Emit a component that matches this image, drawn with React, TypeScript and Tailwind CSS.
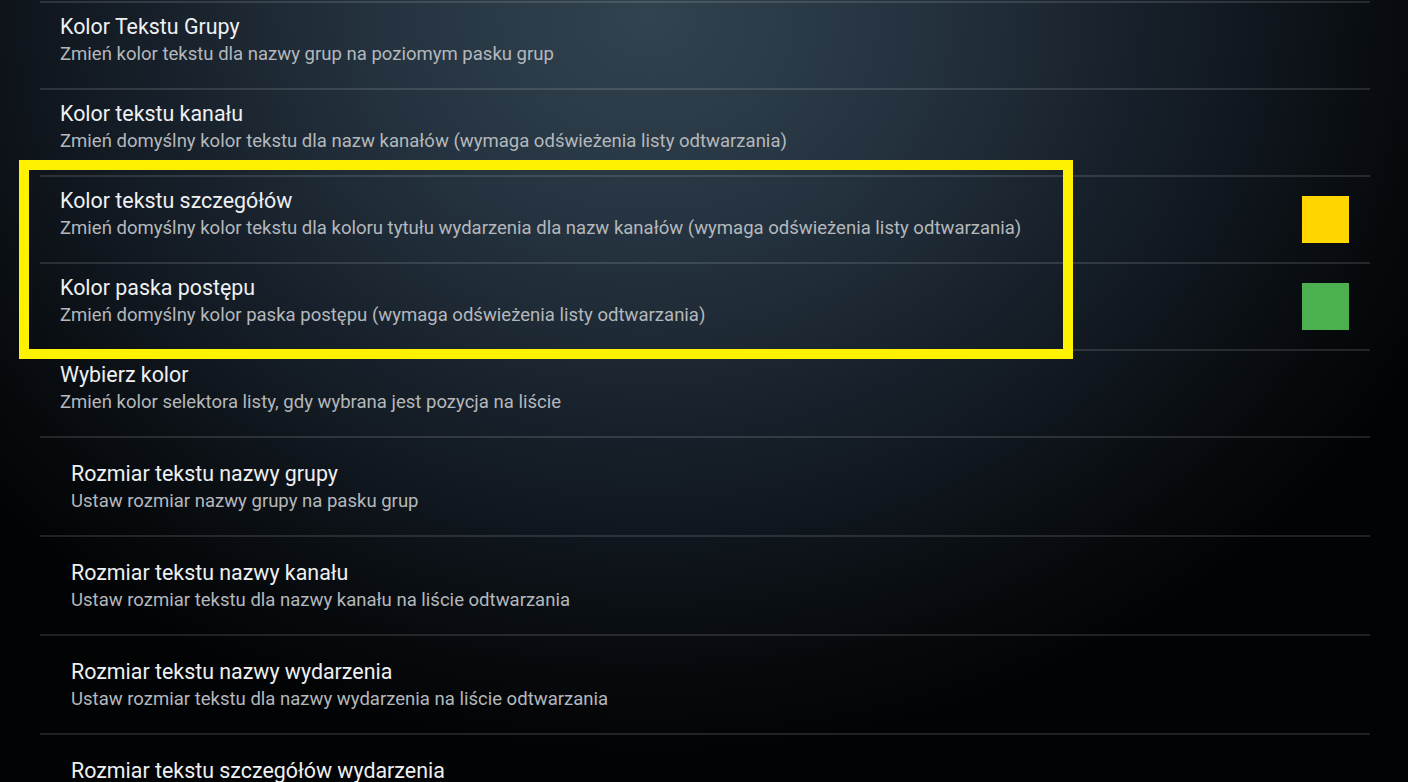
import React from "react";

type Row = { title: string; sub: string; swatch?: string; big?: boolean };

const rows: Row[] = [
  { title: "Kolor Tekstu Grupy", sub: "Zmień kolor tekstu dla nazwy grup na poziomym pasku grup" },
  { title: "Kolor tekstu kanału", sub: "Zmień domyślny kolor tekstu dla nazw kanałów (wymaga odświeżenia listy odtwarzania)" },
  { title: "Kolor tekstu szczegółów", sub: "Zmień domyślny kolor tekstu dla koloru tytułu wydarzenia dla nazw kanałów (wymaga odświeżenia listy odtwarzania)", swatch: "bg-[#ffd600]" },
  { title: "Kolor paska postępu", sub: "Zmień domyślny kolor paska postępu (wymaga odświeżenia listy odtwarzania)", swatch: "bg-[#4caf50]" },
  { title: "Wybierz kolor", sub: "Zmień kolor selektora listy, gdy wybrana jest pozycja na liście" },
  { title: "Rozmiar tekstu nazwy grupy", sub: "Ustaw rozmiar nazwy grupy na pasku grup", big: true },
  { title: "Rozmiar tekstu nazwy kanału", sub: "Ustaw rozmiar tekstu dla nazwy kanału na liście odtwarzania", big: true },
  { title: "Rozmiar tekstu nazwy wydarzenia", sub: "Ustaw rozmiar tekstu dla nazwy wydarzenia na liście odtwarzania", big: true },
  { title: "Rozmiar tekstu szczegółów wydarzenia", sub: "Ustaw rozmiar tekstu dla szczegółów wydarzenia na liście odtwarzania", big: true },
];

export default function App() {
  return (
    <div
      className="relative w-[1408px] h-[782px] overflow-hidden bg-[#020305]"
      style={{ fontFamily: "Roboto, 'Noto Sans', sans-serif" }}
    >
      <div className="absolute inset-0 bg-[radial-gradient(ellipse_62%_95%_at_46%_2%,#31434f_0%,#253340_30%,#141c25_62%,#070a0d_88%,#020304_100%)]" />
      <div className="relative pt-[1px] pl-[40px] w-[1370px]">
        {rows.map((r, i) => (
          <div
            key={i}
            className={`flex items-center border-t-2 border-[#ffffff1f] ${r.big ? "h-[99px]" : "h-[87px]"}`}
          >
            <div className={`flex-1 self-start ${r.big ? "pt-[23px] pl-[31px]" : "pt-[11px] pl-[20px]"}`}>
              <div className="text-[21.4px] leading-[25px] text-[#eef0f2]">{r.title}</div>
              <div className="mt-[4px] text-[18.55px] leading-[22px] text-[#b4b8bc]">{r.sub}</div>
            </div>
            {r.swatch && <div className={`w-[47px] h-[47px] mr-[21px] ${r.swatch}`} />}
          </div>
        ))}
      </div>
      <div className="absolute left-[19px] top-[160px] w-[1054px] h-[199px] border-[10px] border-[#fff200]" />
    </div>
  );
}
